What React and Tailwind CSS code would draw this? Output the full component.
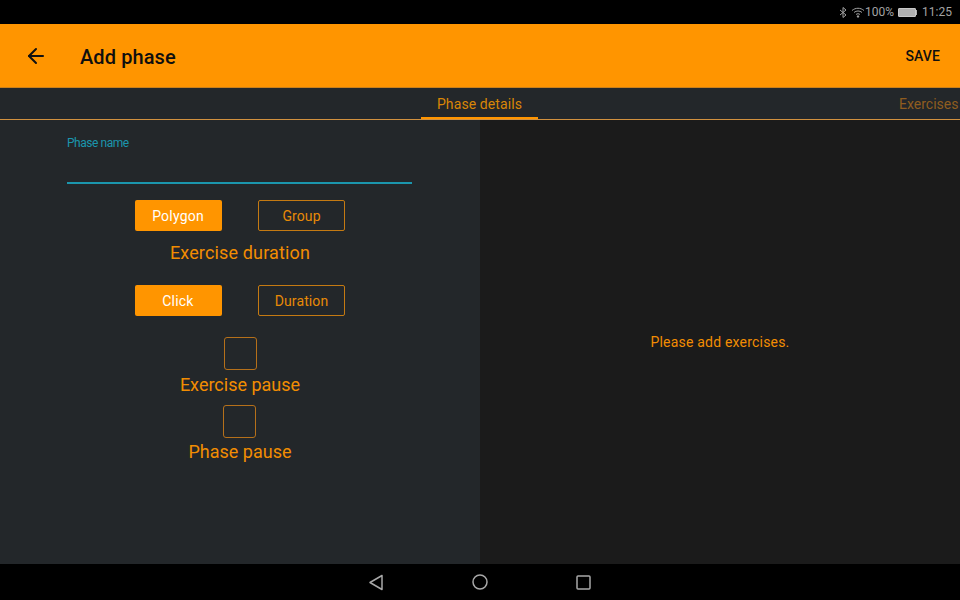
import React from "react";
import { ArrowLeft } from "lucide-react";

const SolidButton = ({ label }) => (
  <button className="w-[87px] h-[31px] bg-[#ff9500] rounded-[2px] text-white text-sm tracking-[0.2px] pr-px">{label}</button>
);

const OutlineButton = ({ label }) => (
  <button className="w-[87px] h-[31px] border border-[#c47a12] rounded-[2px] text-[#e88a06] text-sm tracking-[0.1px]">{label}</button>
);

const CheckRow = ({ label, second }) => (
  <div className="flex flex-col items-center">
    <div className={`w-[33px] h-[33px] border border-[#b5701a] rounded-[3px] ${second ? "mr-px" : ""}`} />
    <span className={`text-lg leading-[30px] text-[#f28d02] ${second ? "-mt-px" : ""}`}>{label}</span>
  </div>
);

const App = () => {
  return (
    <div className="w-[960px] h-[600px] flex flex-col overflow-hidden bg-black font-['Roboto',sans-serif]">
      <div className="h-6 flex items-center justify-end pr-2 gap-1 text-xs text-[#a3a3a3]">
        <svg width="8" height="11" viewBox="0 0 8 11" fill="none" stroke="#a3a3a3" strokeWidth="1">
          <path d="M1 3l6 5-3 2.500V.5l3 2.500-6 5" />
        </svg>
        <svg width="14" height="11" viewBox="0 0 14 11" fill="none" stroke="#a3a3a3" strokeWidth="1">
          <path d="M1 3.500c3.500-3 8.500-3 12 0M3 5.500c2.500-2 5.500-2 8 0M5 7.500c1.200-1 2.800-1 4 0" />
          <path d="M7 10.500l-1-1.500h2z" fill="#a3a3a3" />
        </svg>
        <span className="-ml-1">100%</span>
        <div className="flex items-center">
          <div className="w-[18px] h-[9px] bg-[#b0b0b0] border border-[#c8c8c8] rounded-[1px]" />
          <div className="w-px h-[5px] bg-[#b0b0b0]" />
        </div>
        <span className="ml-px">11:25</span>
      </div>

      <div className="h-[64px] bg-[#ff9500] flex items-center pl-[24px] pr-[20px] border-b border-[#c9801c]">
        <ArrowLeft size={24} color="#111111" strokeWidth={2} />
        <h1 className="ml-[32px] mt-[2px] text-xl font-medium text-[#0f0f0f] tracking-[0.1px]">Add phase</h1>
        <span className="ml-auto mt-px text-sm font-medium text-[#0f0f0f] tracking-[0.1px]">SAVE</span>
      </div>

      <div className="h-8 bg-[#23272a] flex border-b border-[#d1913f] overflow-hidden whitespace-nowrap">
        <div className="ml-[421px] w-[117px] h-8 shrink-0 border-b-[3px] border-[#ff9500] text-sm tracking-[0.1px] text-[#d98606] text-center pt-[6px]">
          Phase details
        </div>
        <div className="ml-[361px] shrink-0 text-sm text-[#8f5d1f] pt-[6px]">Exercises</div>
      </div>

      <div className="flex-1 flex">
        <div className="w-[480px] bg-[#23272a] flex flex-col items-center pt-[16px]">
          <div className="w-[345px] h-[48px] mr-px border-b-2 border-[#1b96ad]">
            <span className="block text-xs leading-[14px] text-[#1b96ad] tracking-[-0.45px]">Phase name</span>
          </div>
          <div className="mt-4 flex gap-[36px]">
            <SolidButton label="Polygon" />
            <OutlineButton label="Group" />
          </div>
          <p className="mt-[7px] text-lg leading-[30px] text-[#f28d02] tracking-[0.15px]">Exercise duration</p>
          <div className="mt-[17px] flex gap-[36px]">
            <SolidButton label="Click" />
            <OutlineButton label="Duration" />
          </div>
          <div className="mt-[21px] flex flex-col items-center gap-[5px]">
            <CheckRow label="Exercise pause" />
            <CheckRow label="Phase pause" second />
          </div>
        </div>
        <div className="w-[480px] bg-[#1b1b1b] flex items-center justify-center pb-px">
          <p className="text-sm text-[#f28d02] tracking-[0.2px]">Please add exercises.</p>
        </div>
      </div>

      <div className="h-9 flex items-center justify-center gap-[88px] pr-[2px]">
        <svg width="16" height="17" viewBox="0 0 16 17" fill="none" stroke="#a8a8a8" strokeWidth="1.500">
          <path d="M14 1.500v14L2 8.500z" strokeLinejoin="round" />
        </svg>
        <svg width="16" height="16" viewBox="0 0 16 16" fill="none" stroke="#a8a8a8" strokeWidth="1.500">
          <circle cx="8" cy="8" r="7" />
        </svg>
        <svg width="15" height="15" viewBox="0 0 15 15" fill="none" stroke="#a8a8a8" strokeWidth="1.500">
          <rect x="1" y="1" width="13" height="13" rx="1" />
        </svg>
      </div>
    </div>
  );
};

export default App;
